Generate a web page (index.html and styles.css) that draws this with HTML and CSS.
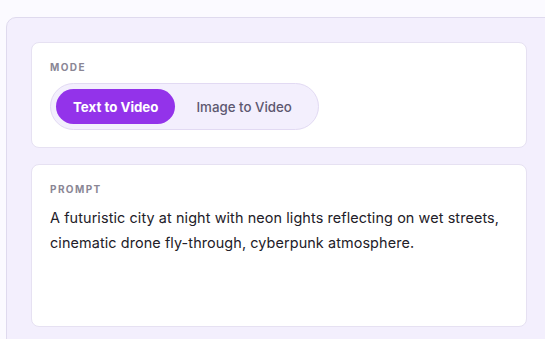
FILE: index.html
```html
<!DOCTYPE html>
<html lang="en">

<head>
    <meta charset="UTF-8">
    <meta name="viewport" content="width=device-width, initial-scale=1.0">
    <title>Video Generator</title>
    <link rel="stylesheet" href="styles.css">
</head>

<body>

    <div class="panel">
        <div class="card">
            <div class="label">Mode</div>
            <div class="toggle">
                <button class="toggle-btn active">Text to Video</button>
                <button class="toggle-btn">Image to Video</button>
            </div>
        </div>

        <div class="card">
            <div class="label">Prompt</div>
            <div class="prompt">A futuristic city at night with neon lights reflecting on wet streets, cinematic drone fly-through, cyberpunk atmosphere.</div>
        </div>
    </div>

</body>

</html>
```

FILE: styles.css
```css
body {
    margin: 0;
    background-color: #fbfaff;
    font-family: 'Inter', 'Liberation Sans', sans-serif;
    overflow: hidden;
}

.panel {
    margin: 17px -20px 0 6px;
    padding: 24px 37px 40px 24px;
    background-color: #f3effd;
    border: 1px solid #dfdaee;
    border-radius: 10px;
    display: flex;
    flex-direction: column;
    gap: 16px;
    min-height: 400px;
}

.card {
    background-color: #ffffff;
    border: 1px solid #e6e1f2;
    border-radius: 8px;
    padding: 18px 18px 17px;
}

.label {
    font-size: 10px;
    line-height: 12px;
    font-weight: 700;
    letter-spacing: 1.4px;
    text-transform: uppercase;
    color: #8a8695;
    margin-bottom: 10px;
}

.toggle {
    display: inline-flex;
    padding: 5px;
    background-color: #f3effd;
    border: 1px solid #e2daf3;
    border-radius: 24px;
}

.toggle-btn {
    font-family: inherit;
    font-size: 13.3px;
    font-weight: 500;
    height: 35px;
    padding: 0 21px;
    border: none;
    border-radius: 18px;
    background: none;
    color: #5d5870;
    cursor: pointer;
}

.toggle-btn.active {
    background-color: #9333ea;
    color: #ffffff;
    font-weight: 700;
    padding: 0 17px;
}

.prompt {
    font-size: 14.4px;
    line-height: 25px;
    letter-spacing: 0.1px;
    color: #222028;
    min-height: 104px;
}
```
